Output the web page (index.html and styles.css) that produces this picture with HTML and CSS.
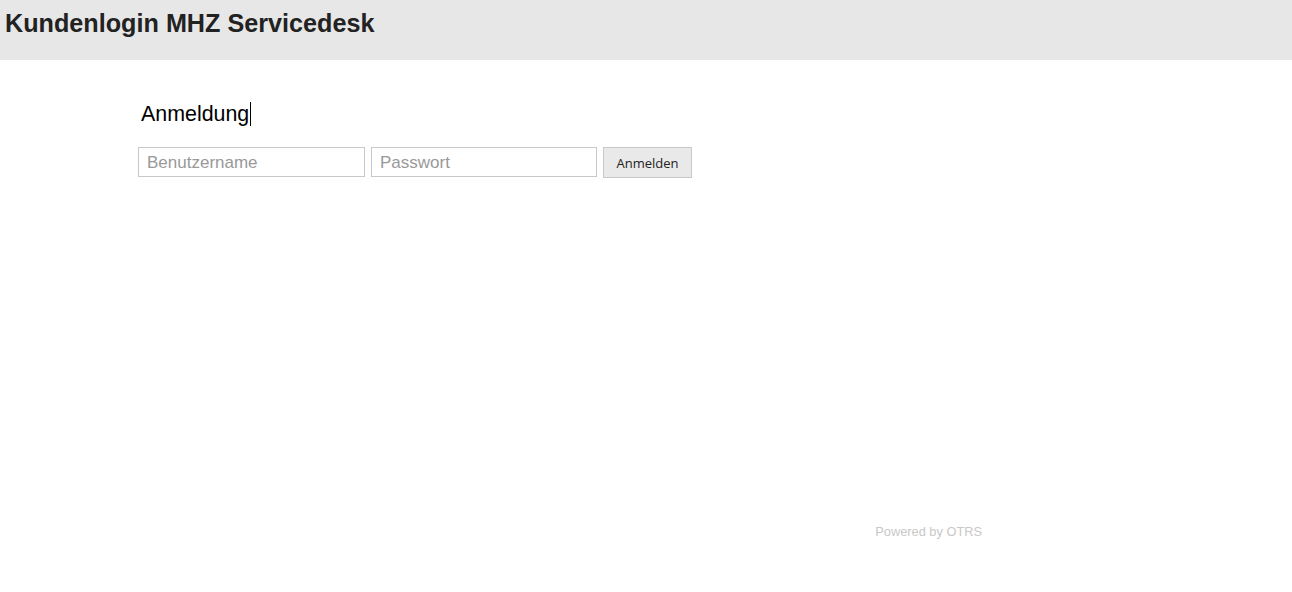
FILE: index.html
```html
<!DOCTYPE html>
<html lang="de">
<head>
  <meta charset="UTF-8">
  <title>Kundenlogin MHZ Servicedesk</title>
  <link rel="stylesheet" href="styles.css">
</head>
<body>

<div class="header">
  <h1>Kundenlogin MHZ Servicedesk</h1>
</div>

<div class="main">
  <h2>Anmeldung<span class="caret"></span></h2>
  <form class="login" onsubmit="return false">
    <input type="text" class="user" placeholder="Benutzername">
    <input type="password" class="pass" placeholder="Passwort">
    <button type="submit">Anmelden</button>
  </form>
  <p class="footer">Powered by OTRS</p>
</div>

</body>
</html>
```

FILE: styles.css
```css
body {
  margin: 0;
  font-family: "Liberation Sans", Arial, sans-serif;
  color: #222;
  background: #fff;
}

.header {
  background-color: #e7e7e7;
  height: 60px;
  padding: 0 5px;
  box-sizing: border-box;
}
.header h1 {
  margin: 0;
  padding-top: 9px;
  font-size: 25.2px;
  line-height: 28px;
  font-weight: bold;
  color: #222;
}

.main {
  width: 844px;
  margin-left: 138px;
  padding-top: 41px;
}
.main h2 {
  margin: 0 0 0 3px;
  font-size: 21.4px;
  font-weight: normal;
  line-height: 26px;
  color: #000;
  display: flex;
  align-items: center;
}
.caret {
  display: inline-block;
  width: 1px;
  height: 24px;
  background: #000;
  margin-left: 1px;
}

.login {
  display: flex;
  gap: 6px;
  margin-top: 20px;
}
.login input {
  width: 227px;
  height: 30px;
  box-sizing: border-box;
  border: 1px solid #c8c8c8;
  padding: 1px 8px 0;
  margin: 0;
  font-family: "Liberation Sans", Arial, sans-serif;
  font-size: 17px;
  color: #333;
}
.login input.pass {
  width: 226px;
}
.login input::placeholder {
  color: #999;
}
.login button {
  width: 89px;
  height: 31px;
  box-sizing: border-box;
  margin: 0;
  border: 1px solid #c8c8c8;
  background-color: #e9e9e9;
  font-family: "Open Sans", "Liberation Sans", sans-serif;
  font-size: 13px;
  color: #222;
  cursor: pointer;
}

.footer {
  margin: 346px 0 0;
  text-align: right;
  font-size: 12.8px;
  color: #c8c8c8;
}
```
